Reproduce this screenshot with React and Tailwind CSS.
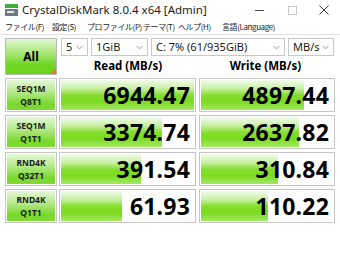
const ui = { fontFamily: '"Noto Sans", "Noto Sans CJK JP", sans-serif' };
const jp = { fontFamily: '"Noto Sans CJK JP", "Noto Sans", sans-serif' };

const rows = [
  { a: "SEQ1M", b: "Q8T1", read: "6944.47", rw: 100, write: "4897.44", ww: 78 },
  { a: "SEQ1M", b: "Q1T1", read: "3374.74", rw: 76, write: "2637.82", ww: 74 },
  { a: "RND4K", b: "Q32T1", read: "391.54", rw: 60, write: "310.84", ww: 58 },
  { a: "RND4K", b: "Q1T1", read: "61.93", rw: 46, write: "110.22", ww: 51 },
];

const menu = [
  { t: "ファイル(F)", w: "w-[47px]" },
  { t: "設定(S)", w: "w-[35px]" },
  { t: "プロファイル(P)", w: "w-[56px]" },
  { t: "テーマ(T)", w: "w-[35px]" },
  { t: "ヘルプ(H)", w: "w-[44px]" },
  { t: "言語(Language)", w: "w-[70px]" },
];

const Combo = ({ label, className }) => (
  <div
    className={`h-[18px] flex items-center justify-between border border-[#c8c8c8] bg-white pl-[4px] pr-[4px] text-[11px] text-[#1a1a1a] whitespace-nowrap ${className}`}
  >
    <span>{label}</span>
    <svg width="7" height="5" viewBox="0 0 7 5">
      <path d="M0.5 0.8 L3.5 3.8 L6.5 0.8" fill="none" stroke="#9a9a9a" strokeWidth="1" />
    </svg>
  </div>
);

const Bar = ({ value, pct }) => (
  <div className="relative h-[34px] border border-[#c6c6c6] bg-white p-px">
    <div className="relative h-full w-full overflow-hidden">
      <div
        className="absolute left-0 top-0 h-full bg-[linear-gradient(to_bottom,#f2fbec_0%,#c9f0a6_28%,#84dd2b_52%,#7cdb20_72%,#a3e964_100%)]"
        style={{ width: `${pct}%` }}
      />
      <div className="relative flex h-full items-center justify-end pr-[4px] text-[23px] font-bold leading-none text-black tracking-[0.2px]">
        {value}
      </div>
    </div>
  </div>
);

export default function App() {
  return (
    <div className="w-[340px] h-[275px] bg-white overflow-hidden" style={ui}>
      {/* title bar */}
      <div className="h-[20px] flex items-center">
        <svg className="ml-[5px]" width="13" height="12" viewBox="0 0 13 12">
          <rect x="0" y="0" width="13" height="4" fill="#3fae3a" />
          <rect x="0" y="5" width="13" height="7" fill="#6f7a80" />
          <rect x="2" y="7" width="7" height="2" fill="#e8e8e8" />
        </svg>
        <span className="ml-[4px] text-[11.5px] text-[#1a1a1a] whitespace-nowrap">CrystalDiskMark 8.0.4 x64 [Admin]</span>
        <div className="ml-auto flex items-center text-[#333]">
          <span className="w-[34px] flex justify-center">
            <span className="block w-[9px] h-px bg-[#444]" />
          </span>
          <span className="w-[32px] flex justify-center">
            <span className="block w-[9px] h-[9px] border border-[#c8c8c8]" />
          </span>
          <span className="w-[32px] flex justify-center">
            <svg width="10" height="10" viewBox="0 0 10 10">
              <path d="M0.5 0.5 L9.5 9.5 M9.5 0.5 L0.5 9.5" stroke="#333" strokeWidth="1" />
            </svg>
          </span>
        </div>
      </div>

      {/* menu */}
      <div className="h-[15px] flex items-center pl-[5px] text-[8px] tracking-[-0.4px] text-[#222] border-b border-[#e2e2e2] whitespace-nowrap" style={jp}>
        {menu.map((m) => (
          <span key={m.t} className={`${m.w} shrink-0`}>{m.t}</span>
        ))}
      </div>

      {/* main */}
      <div className="pl-[5px] pt-[3px] flex flex-col gap-[3px]">
        <div className="flex gap-[2px]">
          <div className="relative w-[52px] h-[37px] border border-[#b9b9b9] bg-[linear-gradient(to_bottom,#e4f7d6_0%,#a9e878_40%,#6dd41f_75%,#6cd41e_100%)] flex items-center justify-center text-[12px] font-bold text-black">
            All
            <span className="absolute right-0 bottom-0 w-0 h-0 border-l-[6px] border-l-transparent border-b-[6px] border-b-[#f07a1a]" />
          </div>
          <div className="flex flex-col">
            <div className="flex gap-[3px] pl-[2px]">
              <Combo label="5" className="w-[27px]" />
              <Combo label="1GiB" className="w-[57px]" />
              <Combo label="C: 7% (61/935GiB)" className="w-[134px]" />
              <Combo label="MB/s" className="w-[46px]" />
            </div>
            <div className="flex h-[19px] items-center">
              <div className="w-[138px] text-center text-[11.5px] font-bold text-black">Read (MB/s)</div>
              <div className="w-[137px] text-center text-[11.5px] font-bold text-black">Write (MB/s)</div>
            </div>
          </div>
        </div>

        {rows.map((r, i) => (
          <div key={i} className="flex gap-[2px]">
            <div className="w-[52px] h-[34px] border border-[#c6c6c6] bg-white p-px">
              <div className="h-full w-full flex flex-col items-center justify-center bg-[linear-gradient(to_bottom,#e6f7d9_0%,#b5ea8a_40%,#78d82c_80%,#80da36_100%)] text-[8.5px] font-bold leading-[13px] text-[#1c1c1c]">
                <span>{r.a}</span>
                <span>{r.b}</span>
              </div>
            </div>
            <div className="w-[137px]">
              <Bar value={r.read} pct={r.rw} />
            </div>
            <div className="w-[136px] ml-px">
              <Bar value={r.write} pct={r.ww} />
            </div>
          </div>
        ))}
      </div>
    </div>
  );
}
